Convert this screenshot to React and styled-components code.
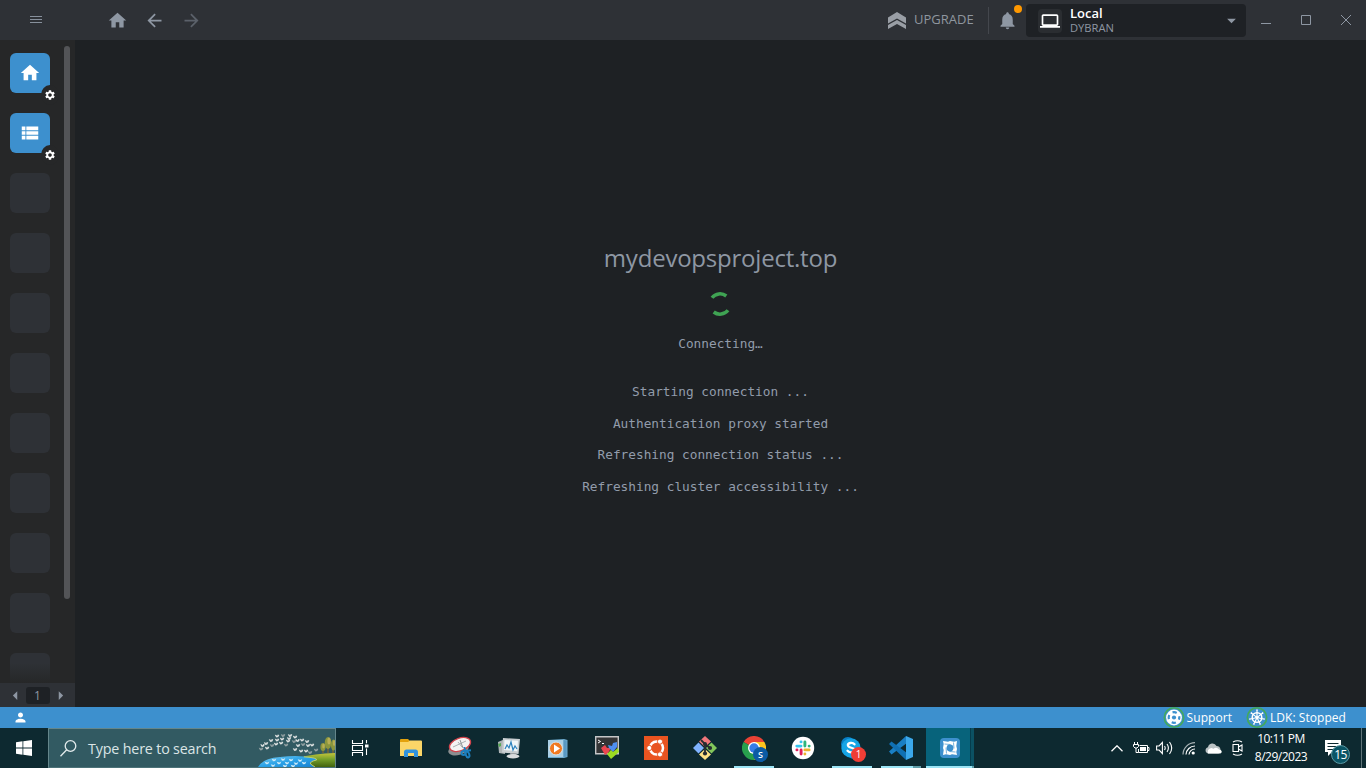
import React from "react";
import styled, { createGlobalStyle } from "styled-components";
import {
  MdHome, MdArrowBack, MdArrowForward, MdViewList, MdSettings, MdNotifications,
  MdArrowDropDown, MdPerson, MdLaptop, MdArrowLeft, MdArrowRight,
} from "react-icons/md";

const Global = createGlobalStyle`
  * { box-sizing: border-box; }
  body { margin: 0; overflow: hidden; background: #1e2124; }
  svg { display: block; flex: none; }
`;

const Screen = styled.div`
  width: 1366px;
  height: 768px;
  display: flex;
  flex-direction: column;
  font-family: "Open Sans", "Noto Sans", sans-serif;
  color: #8e97a3;
  white-space: nowrap;
`;

/* ---------- title bar ---------- */
const TitleBar = styled.header`
  height: 40px;
  display: flex;
  align-items: center;
  background: #2e3136;
`;
const MenuButton = styled.div`
  width: 72px;
  display: flex;
  justify-content: center;
  margin-top: -1px;
  color: #87909c;
`;
const NavButtons = styled.nav`
  display: flex;
  align-items: center;
  gap: 16px;
  margin: 1px auto 0 35px;
`;
const NavButton = styled.span`
  display: flex;
  color: ${(p) => (p.$disabled ? "#5b616a" : "#8e97a3")};
`;
const Upgrade = styled.div`
  display: flex;
  align-items: center;
  width: 101px;
  height: 27px;
  gap: 8px;
  border-right: 1px solid #44474d;
  font-size: 13px;
  line-height: 16px;
  color: #8e969f;
`;
const UpgradeLabel = styled.span`
  padding-bottom: 2px;
`;
const Bell = styled.div`
  position: relative;
  display: flex;
  width: 37px;
  padding: 1px 0 0 8px;
`;
const Dot = styled.i`
  position: absolute;
  left: 25px;
  top: -4px;
  width: 8px;
  height: 8px;
  border-radius: 50%;
  background: #ff9800;
`;
const Account = styled.div`
  width: 220px;
  height: 33px;
  margin-top: 1px;
  padding: 0 4px 0 12px;
  display: flex;
  align-items: center;
  border-radius: 4px;
  background: #1e2125;
`;
const AccountIcon = styled.span`
  width: 24px;
  height: 24px;
  margin-right: 8px;
  display: grid;
  place-items: center;
  border-radius: 4px;
  background: #2a2d31;
  color: #fff;
`;
const AccountText = styled.div`
  flex: 1;
  font-size: 11.2px;
  line-height: 14px;
`;
const AccountName = styled.div`
  font-size: 13px;
  font-weight: 600;
  line-height: 15px;
  color: #fff;
`;
const WindowControls = styled.div`
  display: flex;
  width: 120px;
`;
const WindowButton = styled.span`
  width: 40px;
  display: flex;
  justify-content: center;
`;

/* ---------- body ---------- */
const Body = styled.div`
  height: 667px;
  display: flex;
`;
const Sidebar = styled.aside`
  width: 75px;
  display: flex;
  flex-direction: column;
  background: #262728;
`;
const HotbarArea = styled.div`
  height: 643px;
  display: flex;
  justify-content: space-between;
  overflow: hidden;
  padding: 0 5px 0 10px;
`;
const Hotbar = styled.div`
  display: flex;
  flex-direction: column;
  gap: 20px;
  padding-top: 13px;
`;
const Tile = styled.div`
  position: relative;
  flex: none;
  width: 40px;
  height: 40px;
  display: grid;
  place-items: center;
  border-radius: 6px;
  color: #fff;
  background: ${(p) => (p.$active ? "#3d90ce" : p.$faded ? "linear-gradient(#2e3136 25%, #262728 75%)" : "#2e3136")};
`;
const Gear = styled.span`
  position: absolute;
  left: 31px;
  top: 32px;
  width: 18px;
  height: 20px;
  display: grid;
  place-items: center;
  border-radius: 50%;
  background: #262728;
`;
const ScrollThumb = styled.div`
  width: 6px;
  height: 553px;
  margin-top: 6px;
  border-radius: 3px;
  background: #535457;
`;
const Pager = styled.div`
  height: 24px;
  display: flex;
  align-items: center;
  justify-content: center;
  background: #2e3136;
`;
const PageNumber = styled.span`
  width: 24px;
  height: 17px;
  border-radius: 3px;
  background: #1e2125;
  font-size: 12px;
  line-height: 17px;
  text-align: center;
`;
const Content = styled.main`
  flex: 1;
  display: flex;
  flex-direction: column;
  align-items: center;
  background: #1e2124;
`;
const Title = styled.h1`
  margin: 201px 0 0;
  font-size: 24px;
  line-height: 34px;
  font-weight: 400;
  letter-spacing: -0.22px;
`;
const Spinner = styled.div`
  margin: 17px 1px 0 0;
`;
const LogLine = styled.pre`
  margin: ${(p) => p.$top}px 0 0;
  font-family: "DejaVu Sans Mono", monospace;
  font-size: 12.78px;
  line-height: 17px;
  color: #929cab;
`;

/* ---------- status bar ---------- */
const StatusBar = styled.footer`
  height: 21px;
  display: flex;
  align-items: center;
  padding: 0 20px 0 13px;
  background: #3d90ce;
  color: #fff;
  font-size: 12px;
  font-weight: 500;
  letter-spacing: 0.05px;
`;
const StatusItem = styled.div`
  display: flex;
  align-items: center;
  gap: 2px;
  margin-left: ${(p) => p.$left};
`;

/* ---------- taskbar ---------- */
const Taskbar = styled.div`
  height: 40px;
  display: flex;
  background: #0d2930;
  color: #fff;
  font-family: "Open Sans", sans-serif;
`;
const Start = styled.div`
  width: 48px;
  display: grid;
  place-items: center;
`;
const Search = styled.div`
  width: 288px;
  display: flex;
  align-items: center;
  padding-left: 11px;
  border: 1px solid #64868b;
  border-bottom-color: #4c7278;
  background: #325a62;
  color: #dbe5e6;
  font-size: 14.3px;
  letter-spacing: -0.17px;
`;
const SearchLabel = styled.span`
  flex: 1;
  padding-left: 11px;
`;
const TaskView = styled.div`
  width: 55px;
  padding-left: 15px;
  display: flex;
  align-items: center;
`;
const Apps = styled.div`
  display: flex;
  gap: 9px;
`;
const TaskbarApp = styled.div`
  width: 40px;
  display: grid;
  place-items: center;
  padding-top: 2px;
  border-bottom: 2px solid ${(p) => (p.$running ? "#9be4f5" : "transparent")};
`;
const StackedApp = styled(TaskbarApp)`
  border-image: linear-gradient(90deg, #9be4f5 31px, #5f9da8 31px) 2;
`;
const ActiveApp = styled(TaskbarApp)`
  width: 48px;
  margin-left: -4px;
  background: linear-gradient(90deg, #07637b 44px, #053c4c 44px, #053c4c 45px, #0b5163 45px);
  border-image: linear-gradient(90deg, #9be4f5 44px, #5f9da8 44px) 2;
`;
const Tray = styled.div`
  margin-left: auto;
  display: flex;
`;
const TrayIcon = styled.span`
  width: 24px;
  display: grid;
  place-items: center;
`;
const Clock = styled.div`
  width: 64px;
  text-align: center;
  font-size: 12px;
  line-height: 18px;
  letter-spacing: -0.5px;
  padding-top: 2px;
`;
const Notifications = styled.div`
  position: relative;
  width: 48px;
  padding: 12px 0 0 12px;
`;
const Count = styled.b`
  position: absolute;
  left: 18px;
  top: 17px;
  width: 19px;
  height: 19px;
  border-radius: 50%;
  border: 1px solid #5b9aa5;
  background: #0b5566;
  font-size: 12px;
  font-weight: 400;
  line-height: 17px;
  text-align: center;
  letter-spacing: -0.6px;
`;
const ShowDesktop = styled.div`
  width: 5px;
  border-left: 1px solid #5f7478;
`;
const AppBadge = styled.b`
  position: absolute;
  right: ${(p) => p.$right}px;
  bottom: ${(p) => p.$bottom}px;
  width: 15px;
  height: 15px;
  border-radius: 50%;
  background: ${(p) => p.$color};
  color: #fff;
  font-size: ${(p) => p.$size}px;
  font-weight: ${(p) => p.$weight};
  line-height: 15px;
  text-align: center;
`;
const Badged = styled.span`
  position: relative;
`;

const UpgradeIcon = () => (
  <svg width="18" height="17" viewBox="0 0 18 17" fill="#999ea5">
    <path d="M0 5.500 9 0l9 5.500v6L9 6.500 0 11.500z" />
    <path d="M0 13 9 8l9 5v4l-9-5-9 5z" />
  </svg>
);

const Lifebuoy = () => (
  <svg width="22" height="21" viewBox="0 0 22 21">
    <circle cx="11" cy="10.500" r="9.700" fill="none" stroke="#44a95a" strokeWidth="1.600" />
    <circle cx="11" cy="10.500" r="7.900" fill="#fff" />
    <circle cx="11" cy="10.500" r="5.300" fill="none" stroke="#3d90ce" strokeWidth="2.200" strokeDasharray="4.320 4.005" strokeDashoffset="2.160" />
    <circle cx="11" cy="10.500" r="2.100" fill="#3d90ce" />
  </svg>
);

const Helm = () => (
  <svg width="22" height="21" viewBox="0 0 22 21" fill="none" stroke="#fff">
    <circle cx="11" cy="10.500" r="9.700" stroke="#44a95a" strokeWidth="1.600" />
    <circle cx="11" cy="10.500" r="4.800" strokeWidth="1.500" />
    <circle cx="11" cy="10.500" r="1.200" fill="#fff" />
    {[0, 1, 2, 3, 4, 5, 6].map((n) => (
      <path key={n} d="M11 9.500V2.800M10.200 3.200h1.600" strokeWidth="1.200" transform={`rotate(${(n * 360) / 7} 11 10.500)`} />
    ))}
  </svg>
);

const birds = [
  [3, 20], [8, 14.500], [9, 19], [13, 11.500], [14, 16.500], [19, 11], [19, 7], [18, 15], [25, 6.500], [24, 10],
  [30, 12], [32, 6.500], [28, 16], [23, 14], [31, 9.500], [37, 8], [36, 12.500], [40, 16.500], [39.500, 11.500], [44, 11],
  [45, 15.500], [49, 12.500], [50, 16.500], [54, 16], [58, 21], [43, 22], [37, 20.500], [48, 22], [52, 23.500], [4.500, 16.500],
];
const ripples = [
  [9, 34], [16, 31], [21, 34], [25, 30.500], [29, 34], [33, 31], [38, 34.500], [42, 31.500], [46, 34], [27, 37], [15, 36.500], [35, 37],
];
const SearchArt = () => (
  <svg width="77" height="38" viewBox="0 0 77 38">
    <defs>
      <linearGradient id="lake" x1="0" y1="0" x2="1" y2="1">
        <stop offset="0" stopColor="#79cbed" /><stop offset=".5" stopColor="#2aa2e8" /><stop offset="1" stopColor="#1780d0" />
      </linearGradient>
      <linearGradient id="hill" x1="0" y1="0" x2="0" y2="1">
        <stop offset="0" stopColor="#c4c53a" /><stop offset=".45" stopColor="#759f2a" /><stop offset="1" stopColor="#42630f" />
      </linearGradient>
    </defs>
    <path d="M42 28.500Q56 24.500 77 24v14H50z" fill="url(#hill)" />
    <path d="M0 38Q5 29 22 28q14-1.500 24-.5 14 1 13 3.500-7 1.500-6 4l4 3z" fill="url(#lake)" />
    <path d="M46 27.800q14 1 12.500 3.200-7 1.500-6 4l4.500 3" fill="none" stroke="#d3d45b" strokeWidth=".9" />
    <path d="M65 24v-6M70 24V14M75 24v-8" stroke="#8b6a2a" strokeWidth="1.200" />
    <g fill="#8b963c">
      <ellipse cx="65" cy="18" rx="2.600" ry="4" /><ellipse cx="70" cy="14" rx="3.300" ry="6" /><ellipse cx="75.500" cy="16" rx="2.600" ry="5.500" />
    </g>
    <g fill="#b7ae55">
      <ellipse cx="65.500" cy="17" rx="1.300" ry="2.500" /><ellipse cx="71" cy="12" rx="1.600" ry="3.500" /><ellipse cx="76" cy="14" rx="1.200" ry="3" />
    </g>
    {birds.map(([x, y], i) => (
      <path key={i} d="m-2.200-1.300 1.600.4L0 0 .8-1.500 2.300-1.100 1.300.9-.5 1.400-1.400.4z" transform={`translate(${x} ${y})`} fill={i % 4 === 0 ? "#94a2a4" : "#dde1e1"} />
    ))}
    {ripples.map(([x, y]) => (
      <path key={x} d="m-2.300-1.300 1.800.5L.5-.6 2.300-1.500 1.200 1-1 1.300z" transform={`translate(${x} ${y})`} fill="#cdebf8" />
    ))}
  </svg>
);

const Explorer = () => (
  <svg width="24" height="24" viewBox="0 0 24 24">
    <path d="M1 4q0-1 1-1h7l2 2v3H1z" fill="#e3a20d" />
    <path d="M1 6h8l2-1.500h11q1 0 1 1V20H1z" fill="#fbd668" />
    <path d="M5 21v-5q0-2.500 2.500-2.500h9Q19 13.500 19 16v5h-4v-4H9v4z" fill="#3293dd" />
  </svg>
);
const Snip = () => (
  <svg width="24" height="24" viewBox="0 0 24 24">
    <ellipse cx="10.500" cy="13.500" rx="10.500" ry="5.500" transform="rotate(-15 10.500 13.500)" fill="#8b8e90" />
    <ellipse cx="12" cy="8.500" rx="11" ry="6.300" transform="rotate(-20 12 8.500)" fill="#f4f3f3" stroke="#d2444c" strokeWidth="1.300" />
    <path d="m5 11 13-6M10 6l4 5" stroke="#a3a9ab" strokeWidth=".9" />
    <path d="m12 4 3 8" stroke="#8d9597" strokeWidth="1" />
    <g fill="none" stroke="#1d7fbe" strokeWidth="2"><path d="m16.500 11 .5 4 6-.8" /><ellipse cx="15.500" cy="17" rx="2" ry="2" /><ellipse cx="19.500" cy="18.500" rx="1.700" ry="3" transform="rotate(-20 19.500 18.500)" /></g>
  </svg>
);
const Monitor = () => (
  <svg width="24" height="24" viewBox="0 0 24 24">
    <path d="m1 6 7-3v15l-6-1z" fill="#aeb4b6" /><path d="m1 8 1 3 2-1V7z" fill="#55a852" />
    <path d="m6 2 17 1-1.500 15L5 16.500z" fill="#c9cfd2" /><path d="m7.500 4 13.500.7-.8 10.500L7 14z" fill="#f1f6f8" />
    <path d="m8 13 2-4 2 3 2-6 2 8 2-4 2 3" fill="none" stroke="#2d82bd" strokeWidth="1.200" />
    <path d="M13 17h6l1 3h-6z" fill="#9aa0a3" /><ellipse cx="16" cy="20.300" rx="6.500" ry="2.200" fill="#d9dcde" />
  </svg>
);
const Player = () => (
  <svg width="24" height="24" viewBox="0 0 24 24">
    <path d="m2 4 16-1 3.500 1v17L18 22H2z" fill="#6ca9cd" /><path d="M2 4h15.500v17H2z" fill="#a9cfe5" />
    <path d="M17.500 4v17l3-.5V5z" fill="#5998c2" />
    <circle cx="10" cy="12.500" r="6.500" fill="#f07a22" stroke="#d9e5ea" strokeWidth="1" /><path d="m8 8.500 6 4-6 4z" fill="#fff" />
  </svg>
);
const Terminal = () => (
  <svg width="24" height="24" viewBox="0 0 24 24">
    <path d="M.7.700h22.600v17H.700z" fill="#343536" stroke="#c4c6c7" strokeWidth="1.400" />
    <path d="m3 4 2.500 1.500L3 7M7 7.500h2" fill="none" stroke="#fff" strokeWidth="1" />
    <path d="m6 12 4-3 2 3h4l-3 5-3 2z" fill="#ed4550" />
    <path d="m13 9 4 1 1-3 4-1v5l-4 5-4-4z" fill="#4e8ff0" />
    <path d="m12 18 4-4 2 2 5-4 1 4-8 7z" fill="#9bdc22" />
  </svg>
);
const Ubuntu = () => (
  <svg width="24" height="24" viewBox="0 0 24 24">
    <path d="M0 0h24v24H0z" fill="#e95420" />
    <circle cx="12.500" cy="12" r="6.500" fill="none" stroke="#fff" strokeWidth="2.500" />
    {[[5.300, 12], [16, 5.600], [16, 18.400]].map(([x, y]) => <circle key={y} cx={x} cy={y} r="2.600" fill="#fff" stroke="#e95420" strokeWidth="1" />)}
  </svg>
);
const Git = () => (
  <svg width="24" height="24" viewBox="0 0 24 24">
    <path d="m12 0 6 5.500-6 5.500-6-5.500z" fill="#f0777b" /><path d="M5.500 6.500 11 12l-5.500 5.500L0 12z" fill="#80b3ff" />
    <path d="M18.500 6.500 24 12l-5.500 5.500L13 12z" fill="#82c65b" /><path d="m12 13 6 5.500-6 5.500-6-5.500z" fill="#ffe285" />
    <path d="m8 4 4 4v10M12 8l5 4" fill="none" stroke="#262c31" strokeWidth="1.800" />
    <circle cx="12" cy="8" r="2" fill="#262c31" /><circle cx="12" cy="17.500" r="2.100" fill="#262c31" /><circle cx="17" cy="12" r="2.100" fill="#262c31" />
  </svg>
);
const Chrome = () => (
  <svg width="24" height="24" viewBox="0 0 24 24">
    <path d="M12 12 1.600 6A12 12 0 0 1 22.400 6z" fill="#e94235" />
    <path d="M12 12V6h10.400A12 12 0 0 1 12 24l5.200-9z" fill="#fcc31e" />
    <path d="M12 12 1.600 6A12 12 0 0 0 12 24l5.200-9z" fill="#28a04d" />
    <circle cx="12" cy="12" r="6" fill="#fff" /><circle cx="12" cy="12" r="4.700" fill="#367ce8" />
  </svg>
);
const Slack = () => (
  <svg width="24" height="24" viewBox="0 0 24 24" strokeWidth="2.900" strokeLinecap="round">
    <circle cx="12" cy="12" r="11.200" fill="#fff" />
    <path d="M5.800 10.100H10M10 5.900h.1" stroke="#36c5f0" />
    <path d="M13.900 5.900v4.200M18.100 10.100h.1" stroke="#2eb67d" />
    <path d="M13.900 13.900h4.200M13.900 18v.1" stroke="#ecb22e" />
    <path d="M10.100 13.900v4.200M5.900 13.900h.1" stroke="#e01e5a" />
  </svg>
);
const Skype = () => (
  <svg width="24" height="24" viewBox="0 0 24 24">
    <circle cx="8" cy="8" r="7" fill="#087fc5" /><circle cx="14" cy="16" r="7" fill="#087fc5" />
    <circle cx="11" cy="12" r="9.700" fill="#16a5e6" />
    <path d="M14.500 8.300Q13 6.500 10.300 7c-3.500.7-3 3.600.2 4.500 2.600.7 4.500 1.300 3.700 3.500-.8 2-4.700 2-6.700-.2" fill="none" stroke="#fff" strokeWidth="2.300" strokeLinecap="round" />
  </svg>
);
const Code = () => (
  <svg width="24" height="24" viewBox="0 0 24 24">
    <path d="M17 0 0 15.500 2.500 18.500 18 7z" fill="#1a7fc4" /><path d="M2.500 5.500 0 8l17 16 1-7z" fill="#1070b3" />
    <path d="M17 0 24 3v18l-7 3z" fill="#3ba8eb" />
  </svg>
);
const Lens = () => (
  <svg width="20" height="20" viewBox="0 0 20 20">
    <rect width="20" height="20" rx="4" fill="#3d90ce" />
    <path d="m3 3 5 .7 2-.7 4 .7 3-.7-.7 5 .7 3-.7 3 .7 3-5-.7-2 .7-4-.7-3 .7.7-5-.7-2 .7-4z" fill="#fff" />
    <circle cx="10" cy="10" r="3.400" fill="#3d90ce" />
    <path d="m4.500 6 6 .5M13.500 4.500l.5 6M15.500 14l-6-.5M6.500 15.500 6 9.500" stroke="#3d90ce" strokeWidth=".7" />
  </svg>
);

const lines = ["Starting connection ...", "Authentication proxy started", "Refreshing connection status ...", "Refreshing cluster accessibility ..."];

export default function App() {
  return (
    <Screen>
      <Global />
      <TitleBar>
        <MenuButton>
          <svg width="12" height="7" stroke="currentColor"><path d="M0 .5h12M0 3.500h12M0 6.500h12" /></svg>
        </MenuButton>
        <NavButtons>
          <NavButton><MdHome size={21} /></NavButton>
          <NavButton><MdArrowBack size={21} /></NavButton>
          <NavButton $disabled><MdArrowForward size={21} /></NavButton>
        </NavButtons>
        <Upgrade><UpgradeIcon /><UpgradeLabel>UPGRADE</UpgradeLabel></Upgrade>
        <Bell><MdNotifications size={21} /><Dot /></Bell>
        <Account>
          <AccountIcon><MdLaptop size={20} /></AccountIcon>
          <AccountText><AccountName>Local</AccountName>DYBRAN</AccountText>
          <MdArrowDropDown size={21} />
        </Account>
        <WindowControls>
          <WindowButton><svg width="10" height="10"><path d="M0 8h10v1H0z" fill="#8e97a3" /></svg></WindowButton>
          <WindowButton><svg width="10" height="10" fill="none" stroke="#8e97a3"><path d="M.5.500h9v9h-9z" /></svg></WindowButton>
          <WindowButton><svg width="10" height="10" stroke="#8e97a3"><path d="m0 0 10 10M10 0 0 10" /></svg></WindowButton>
        </WindowControls>
      </TitleBar>

      <Body>
        <Sidebar>
          <HotbarArea>
            <Hotbar>
              <Tile $active><MdHome size={22} /><Gear><MdSettings size={12} /></Gear></Tile>
              <Tile $active><MdViewList size={22} /><Gear><MdSettings size={12} /></Gear></Tile>
              {Array.from({ length: 9 }, (_, i) => <Tile key={i} $faded={i === 8} />)}
            </Hotbar>
            <ScrollThumb />
          </HotbarArea>
          <Pager><MdArrowLeft size={21} /><PageNumber>1</PageNumber><MdArrowRight size={21} /></Pager>
        </Sidebar>
        <Content>
          <Title>mydevopsproject.top</Title>
          <Spinner>
            <svg width="24" height="24" viewBox="0 0 24 24" fill="none" stroke="#3fa353" strokeWidth="3.500">
              <path d="M4 5.800A10.200 10.200 0 0 1 18.300 4" /><path d="M20 18.200A10.200 10.200 0 0 1 5.700 20" />
            </svg>
          </Spinner>
          <LogLine $top={19}>Connecting…</LogLine>
          {lines.map((text, i) => <LogLine key={text} $top={i === 0 ? 31 : 14.700}>{text}</LogLine>)}
        </Content>
      </Body>

      <StatusBar>
        <MdPerson size={15} />
        <StatusItem $left="auto"><Lifebuoy />Support</StatusItem>
        <StatusItem $left="14px"><Helm />LDK: Stopped</StatusItem>
      </StatusBar>

      <Taskbar>
        <Start>
          <svg width="16" height="16" fill="#fff"><path d="m0 2.200 6.500-.9v6.300H0zM7.300 1.200 16 0v7.600H7.300zM0 8.400h6.500v6.300L0 13.800zM7.300 8.400H16V16l-8.700-1.200z" /></svg>
        </Start>
        <Search>
          <svg width="17" height="17" fill="none" stroke="#e3ebec" strokeWidth="1.300"><circle cx="10.500" cy="6" r="5.300" /><path d="M6.700 9.800.5 16.200" /></svg>
          <SearchLabel>Type here to search</SearchLabel>
          <SearchArt />
        </Search>
        <TaskView>
          <svg width="18" height="16" fill="none" stroke="#fff" strokeWidth="1.100"><path d="M1.500 0v3.500h10V0M1.500 16v-3.500h10V16M1.500 5.500h10v5h-10zM15.500 0v3.300M15.500 8.500V15" /><path d="M14 4.500h3.500v3H14z" fill="#fff" stroke="none" /></svg>
        </TaskView>
        <Apps>
          <TaskbarApp><Explorer /></TaskbarApp>
          <TaskbarApp><Snip /></TaskbarApp>
          <TaskbarApp><Monitor /></TaskbarApp>
          <TaskbarApp><Player /></TaskbarApp>
          <TaskbarApp><Terminal /></TaskbarApp>
          <TaskbarApp><Ubuntu /></TaskbarApp>
          <TaskbarApp><Git /></TaskbarApp>
          <TaskbarApp $running><Badged><Chrome /><AppBadge $right={-2} $bottom={-1.500} $color="#0b5ba5" $size={9} $weight={600}>S</AppBadge></Badged></TaskbarApp>
          <TaskbarApp><Slack /></TaskbarApp>
          <TaskbarApp $running><Badged><Skype /><AppBadge $right={-2} $bottom={-2} $color="#f03e36" $size={10} $weight={400}>1</AppBadge></Badged></TaskbarApp>
          <StackedApp $running><Code /></StackedApp>
          <ActiveApp $running><Lens /></ActiveApp>
        </Apps>
        <Tray>
          <TrayIcon><svg width="12" height="7" fill="none" stroke="#fff" strokeWidth="1.300"><path d="m.5 6.300 5.500-5.500 5.500 5.500" /></svg></TrayIcon>
          <TrayIcon><svg width="17" height="12" fill="none" stroke="#fff"><path d="M6.500 3.500h8v7h-9V7M14.500 5.500H16v3h-1.500M1.500 0v2.500M4.500 0v2.500M.5 2.500h5v2l-1.500 1.500H2L.5 4.500zM3 6v4.500h2.500" /><path d="M7 5h6v4H7z" fill="#fff" stroke="none" /></svg></TrayIcon>
          <TrayIcon><svg width="18" height="14" fill="none" stroke="#fff" strokeWidth="1.100"><path d="M.6 5h2.500l3.300-3.500v11L3.100 9H.600zM8.500 5q1.400 2 0 4M11 3q2.800 4 0 8M13.500 1q4.400 6 0 12" /></svg></TrayIcon>
          <TrayIcon><svg width="14" height="14" fill="none" stroke="#fff" strokeWidth="1.200"><path d="M1 13.500A12 12 0 0 1 13 1.700" opacity=".65" /><path d="M4 13.500a9 9 0 0 1 9-8.500M7 13.500a6 6 0 0 1 6-5.500" /><circle cx="11.200" cy="12" r="1.600" fill="#fff" stroke="none" /></svg></TrayIcon>
          <TrayIcon><svg width="17" height="11"><path d="M3.500 10.500a3.200 3.200 0 0 1-.5-6.300A4.500 4.500 0 0 1 11.500 3a4 4 0 0 1 2 7.500z" fill="#bcc3c5" /><path d="M3 10.500q-1-5 3.500-5.500l2 .8q3-2.500 5.500.700 3.500.5 2.500 3-.5 1-1.500 1z" fill="#fff" /></svg></TrayIcon>
          <TrayIcon><svg width="13" height="16" fill="none" stroke="#fff" strokeWidth="1.100"><path d="M2 4.500h5.500v7H2zM7.500 7l3.500-2v6L7.500 9M2 2q4.500-2.500 9 0M2 14q4.500 2.500 9 0" /></svg></TrayIcon>
          <Clock>10:11 PM<br />8/29/2023</Clock>
          <Notifications>
            <svg width="16" height="16" viewBox="0 0 16 16"><path d="M0 0h16v12H7l-4 4v-4H0z" fill="#fff" /><path d="M2.500 3.500h11M2.500 6.500h11M2.500 9.500h7" stroke="#0d2930" /></svg>
            <Count>15</Count>
          </Notifications>
          <ShowDesktop />
        </Tray>
      </Taskbar>
    </Screen>
  );
}
